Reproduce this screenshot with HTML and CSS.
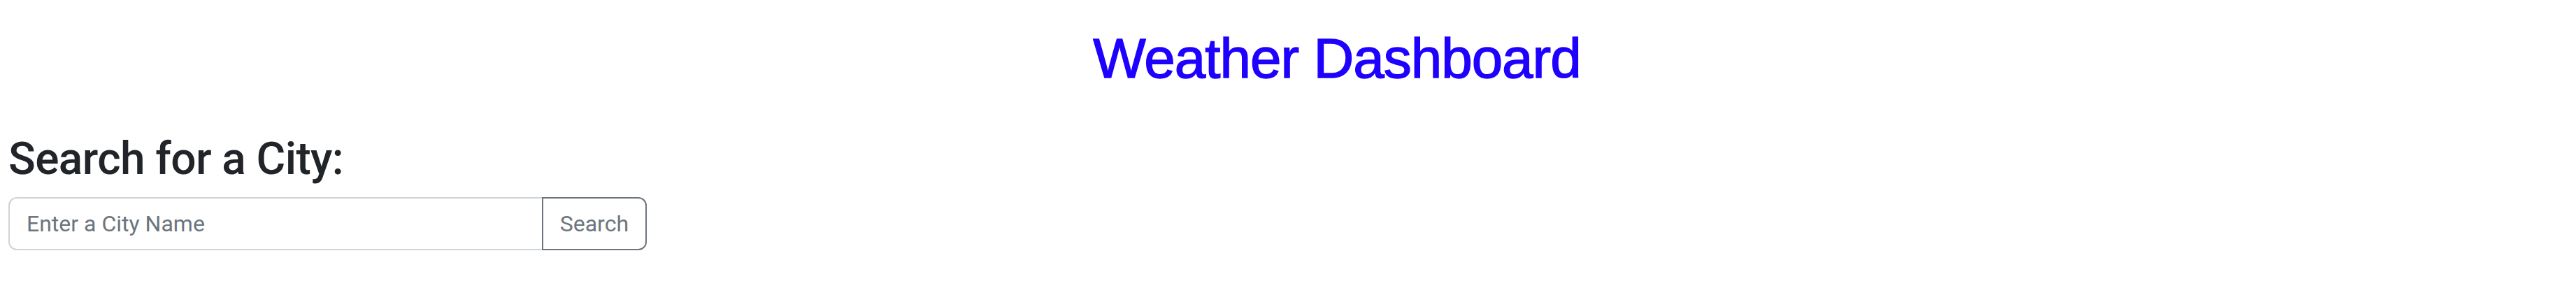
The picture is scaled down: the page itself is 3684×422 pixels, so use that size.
FILE: index.html
```html
<!DOCTYPE html>
<html lang="en">
<head>
<meta charset="utf-8">
<title>Weather Dashboard</title>
<link rel="stylesheet" href="styles.css">
</head>
<body>
  <header class="header">
    <h1 class="title">Weather Dashboard</h1>
  </header>
  <main class="main">
    <section class="search">
      <h2 class="search-title">Search for a City:</h2>
      <form class="input-group" onsubmit="return false">
        <input class="city-input" type="text" placeholder="Enter a City Name">
        <button class="search-btn" type="submit">Search</button>
      </form>
    </section>
  </main>
</body>
</html>
```

FILE: styles.css
```css
* { box-sizing: border-box; }

body {
  margin: 0;
  background: #ffffff;
  color: #212529;
  font-family: "Roboto", "Helvetica Neue", Arial, sans-serif;
}

.header {
  padding: 36px 0 0 140px;
}

.title {
  margin: 0;
  text-align: center;
  font-family: "Liberation Sans", Arial, sans-serif;
  font-weight: 400;
  font-size: 80px;
  line-height: 96px;
  letter-spacing: -1px;
  -webkit-text-stroke: 1.4px #1e00ff;
  color: #1e00ff;
}

.main {
  padding: 57px 12px 0 12px;
}

.search-title {
  margin: 0 0 16px 0;
  font-weight: 500;
  font-size: 64px;
  line-height: 77px;
  letter-spacing: -0.6px;
  color: #212529;
}

.input-group {
  display: flex;
  width: 913px;
  height: 76px;
}

.city-input {
  flex: 1;
  min-width: 0;
  height: 100%;
  padding: 0 24px;
  border: 2px solid #ced4da;
  border-right: none;
  border-radius: 12px 0 0 12px;
  font-family: inherit;
  font-size: 32px;
  color: #212529;
  background: #fff;
  outline: none;
}

.city-input::placeholder {
  color: #6c757d;
  opacity: 1;
}

.search-btn {
  height: 100%;
  padding: 0 24px;
  border: 2px solid #6c757d;
  border-radius: 0 12px 12px 0;
  background: #fff;
  color: #6c757d;
  font-family: inherit;
  font-size: 32px;
  cursor: pointer;
}
```
